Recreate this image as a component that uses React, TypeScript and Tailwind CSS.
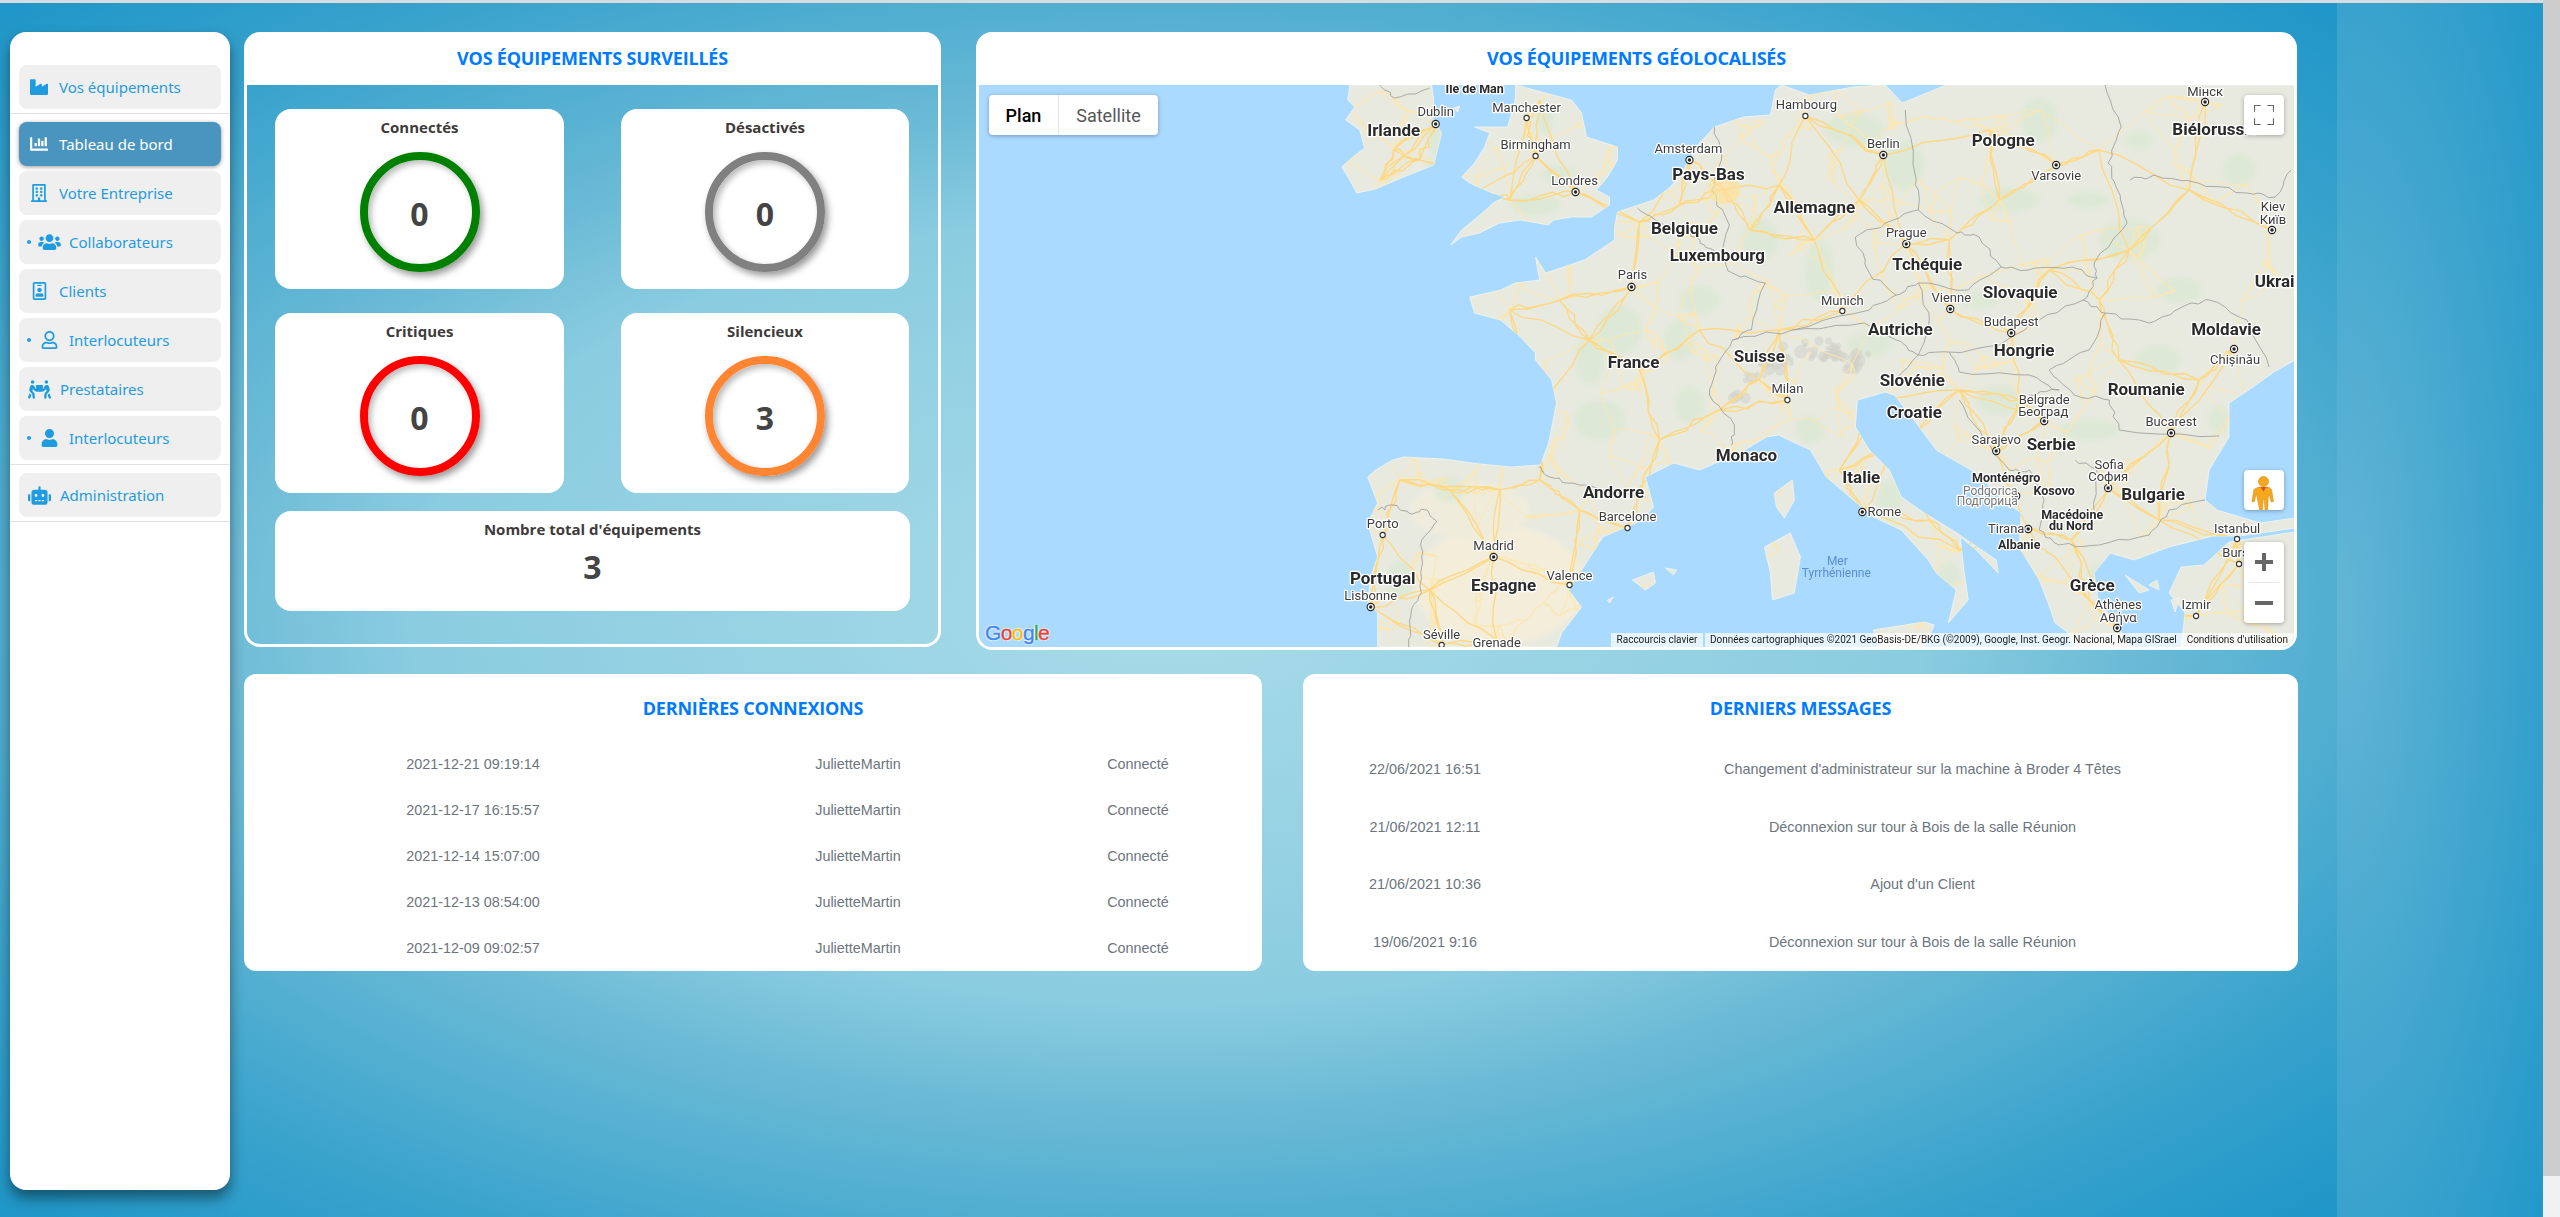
import React from "react";
import { FaIndustry, FaChartBar, FaRegBuilding, FaUsers, FaRegIdBadge, FaRegUser, FaUser, FaPeopleCarry, FaRobot } from "react-icons/fa";

type Item = { label: string; Icon: React.ComponentType<{ className?: string }>; dot?: boolean; active?: boolean; icon: string; gap: string };

const Nav = ({ it }: { it: Item }) => (
  <div className={`h-[44px] mx-[9px] rounded-lg flex items-center text-[15px] ${it.active ? "bg-[#4a95bf] text-white shadow-[0_1px_4px_rgba(0,0,0,0.4)]" : "bg-[#efefef] text-[#1f9ce0]"} ${it.dot ? "pl-[8px]" : "pl-[9px]"}`}>
    {it.dot && <span className="w-[4px] h-[4px] rounded-full bg-[#1f9ce0] shrink-0" />}
    <span className={`flex justify-center shrink-0 ${it.gap}`}>
      <it.Icon className={it.icon} />
    </span>
    <span className="mt-[1px]">{it.label}</span>
  </div>
);

const Divider = () => <div className="h-px bg-[#e2e0e6]" />;

const Title = ({ children }: { children: React.ReactNode }) => (
  <h2 className="text-[#007bff] text-[18px] font-bold tracking-[-0.2px] text-center">{children}</h2>
);

const Stat = ({ label, value, ring }: { label: string; value: string; ring: string }) => (
  <div className="h-[180px] bg-white rounded-2xl flex flex-col items-center pt-[8px]">
    <div className="text-[15px] leading-[20px] font-bold text-[#3e3a3a]">{label}</div>
    <div className={`mt-[15px] w-[120px] h-[120px] rounded-full border-[8px] flex items-center justify-center text-[32px] font-bold text-[#444] shadow-[3px_4px_7px_rgba(0,0,0,0.4),inset_3px_3px_6px_rgba(0,0,0,0.28)] ${ring}`}>
      <span className="mt-[4px]">{value}</span>
    </div>
  </div>
);

/* ---------- map ---------- */
const CONT = "1715,127 1744,117 1771,115 1776,90 1782,85 1810,95 1854,87 1886,85 1903,103 1947,85 2296,85 2296,360 2275,372 2254,387 2230,403 2230,437 2210,470 2206,500 2218,510 2261,523 2296,518 2296,528 2240,536 2214,536 2170,547 2135,560 2111,553 2095,573 2099,600 2119,627 2131,647 2076,647 2068,632 2056,623 2048,600 2040,580 2020,547 2022,513 2004,500 1977,473 1937,450 1917,423 1895,395 1886,392 1858,400 1856,427 1870,450 1890,470 1902,497 1925,513 1953,530 1997,560 1999,573 1977,550 1961,537 1965,573 1969,600 1949,623 1953,607 1957,590 1937,573 1929,560 1902,530 1874,517 1854,500 1827,477 1811,450 1779,435 1767,437 1740,453 1700,470 1674,463 1646,477 1654,507 1643,520 1603,537 1597,547 1569,590 1582,607 1562,633 1557,647 1378,647 1378,613 1368,603 1371,577 1378,557 1368,523 1378,503 1368,477 1376,470 1393,460 1404,457 1444,459 1480,464 1511,467 1541,465 1549,443 1557,403 1552,380 1536,360 1536,353 1521,337 1501,320 1475,313 1470,297 1501,290 1516,283 1540,280 1536,257 1546,273 1585,260 1615,240 1615,227 1618,212 1654,200 1671,187 1684,170 1700,143";
const LANDS = [
  CONT,
  "1350,85 1348,100 1355,107 1346,120 1360,130 1365,148 1353,157 1342,167 1350,180 1357,193 1376,189 1404,177 1434,165 1442,133 1433,118 1434,100 1432,85",
  "1516,85 1572,100 1582,113 1587,137 1618,147 1618,160 1608,177 1597,190 1610,197 1610,205 1592,217 1572,217 1554,220 1549,225 1521,220 1500,223 1480,233 1462,237 1451,245 1462,230 1478,217 1495,202 1506,197 1490,192 1470,183 1462,177 1475,163 1485,147 1490,133 1475,127 1508,127 1513,110 1516,97",
  "2296,532 2230,542 2205,565 2182,567 2170,593 2186,613 2182,647 2296,647",
  "1793,480 1795,500 1785,518 1777,507 1775,493",
  "1791,533 1801,557 1795,593 1773,600 1771,573 1765,547",
  "1874,630 1925,622 1935,625 1925,647 1880,647",
  "1633,580 1654,572 1656,583 1646,590",
  "1666,568 1677,570 1674,575",
  "1608,600 1614,597 1610,603",
  "2126,575 2150,590 2140,593",
  "2150,585 2158,580 2160,590",
  "2172,600 2180,598 2176,612",
  "1454,108 1460,106 1458,112",
];
const BORDERS = [
  "1539,467 1546,475 1567,483 1597,488 1646,497",
  "1378,510 1393,505 1409,513 1427,510 1437,522 1422,540 1422,567 1419,597 1411,617 1409,647",
  "1638,208 1660,222 1690,232 1705,245 1720,253 1733,273 1766,283 1752,330 1733,340 1716,367 1710,395 1735,425 1732,445",
  "1715,127 1722,160 1712,190 1730,225 1720,253",
  "1906,110 1917,180 1919,210 1886,223 1856,237 1870,273 1897,295 1919,283 1969,290 2002,267 1980,237 1958,233 1919,210",
  "2002,267 2029,270 2073,267 2098,278 2095,263 2128,223 2117,187 2109,163 2122,127 2106,85",
  "2131,180 2155,175 2199,183 2248,193 2276,197 2292,170",
  "2098,278 2084,300 2106,313 2150,323 2183,307 2210,300 2248,320 2270,367",
  "1733,340 1793,330 1865,323 1897,340 1919,355 1890,385",
  "1897,295 1870,310 1793,330",
  "1919,283 1930,320 1919,355",
  "2084,300 2040,320 2000,345 1950,352 1919,355",
  "1950,352 1960,372 2030,375 2060,390 2030,395",
  "2106,313 2090,350 2050,370 2075,395 2110,400 2120,430 2220,436",
  "1960,400 1985,440 2010,470 2030,470 2045,500 2040,530 2060,545 2100,545 2150,535 2170,510 2206,500",
  "2076,460 2098,470 2095,510",
  "1380,85 1395,98 1430,88",
];
const GREEN: [number, number, number, number][] = [[1440,135,12,22],[1560,175,18,9],[1535,205,25,10],[1445,165,18,8],[1545,120,8,14],[1855,130,30,16],[1905,165,20,24],[2010,200,30,12],[2040,120,18,22],[2140,140,14,9],[2240,170,16,16],[2180,290,22,12],[1620,330,22,24],[1680,340,15,20],[1600,420,25,20],[1590,360,14,25],[1690,405,14,18],[1700,300,20,14],[1760,240,18,22],[1820,270,14,30],[1870,345,22,12],[2000,400,24,14],[2090,430,30,10],[1980,300,20,8],[2130,240,30,20],[1450,490,16,12],[1400,580,14,18],[1810,430,14,14],[1890,500,12,20],[1950,575,10,12],[2100,575,12,10],[2090,200,20,8],[2160,360,22,14],[2220,420,10,14]];
const HUBS: [number, number][] = [[1436,124],[1394,150],[1380,180],[1420,160],[1527,118],[1536,156],[1576,192],[1510,200],[1540,100],[1480,190],[1690,160],[1725,190],[1680,205],[1640,222],[1806,116],[1884,155],[1780,185],[1815,240],[1750,230],[1632,287],[1560,300],[1590,340],[1510,310],[1540,400],[1640,370],[1700,330],[1660,440],[1720,410],[1760,380],[1788,400],[1843,311],[1780,330],[1907,244],[1860,200],[1951,309],[2012,333],[1950,240],[2000,200],[2057,165],[1990,130],[2100,150],[2206,102],[2273,230],[2190,190],[2130,250],[2100,300],[2050,270],[2235,349],[2172,433],[2200,380],[2120,360],[2045,421],[2109,488],[1997,451],[2020,400],[1960,390],[1863,512],[1905,440],[1930,520],[1960,550],[1880,400],[1840,470],[1383,535],[1371,607],[1400,480],[1450,490],[1494,557],[1500,490],[1570,585],[1628,528],[1580,510],[1540,480],[1442,645],[1497,640],[1430,590],[2029,529],[2072,540],[2118,628],[2238,539],[2197,616],[2240,564],[2160,520],[2090,600]];

let seed = 12345;
const rnd = () => { seed = (seed * 16807) % 2147483647; return seed / 2147483647; };

/* a road or border drawn as a wandering line between two points */
function wander(a: [number, number], b: [number, number], parts: number, amp: number) {
  let d = `M${a[0].toFixed(1)} ${a[1].toFixed(1)}`;
  for (let i = 1; i <= parts; i++) {
    const t = i / parts;
    const j = i === parts ? 0 : 1;
    const x = a[0] + (b[0] - a[0]) * t + j * (rnd() - 0.5) * amp;
    const y = a[1] + (b[1] - a[1]) * t + j * (rnd() - 0.5) * amp;
    d += `L${x.toFixed(1)} ${y.toFixed(1)}`;
  }
  return d;
}

function makeRoads() {
  const pts: [number, number][] = [...HUBS];
  for (let i = 0; i < 640; i++) {
    const x = 1345 + rnd() * 950, y = 85 + rnd() * 565;
    const west = x < 2040 ? 1 : 0.4;
    if (rnd() < west) pts.push([x, y]);
  }
  let main = "", minor = "";
  pts.forEach((p, i) => {
    const near = pts.map((q, j) => ({ q, j, d: (p[0] - q[0]) ** 2 + (p[1] - q[1]) ** 2 })).filter((n) => n.j !== i).sort((a, b) => a.d - b.d);
    if (i < HUBS.length) {
      HUBS.map((q, j) => ({ q, j, d: (p[0] - q[0]) ** 2 + (p[1] - q[1]) ** 2 }))
        .filter((n) => n.j !== i && n.d < 12100)
        .sort((a, b) => a.d - b.d)
        .slice(0, 3)
        .forEach((n) => { main += wander(p, n.q, 5, 7); });
    }
    near.slice(0, 3).forEach((n) => { minor += wander(p, n.q, 3, 5); });
  });
  return { main, minor };
}
const ROADS = makeRoads();

const BORDER_D = BORDERS.map((line) => {
  const pts = line.split(" ").map((s) => s.split(",").map(Number) as [number, number]);
  let d = "";
  for (let i = 0; i + 1 < pts.length; i++) {
    const seg = wander(pts[i], pts[i + 1], 5, 4);
    d += i === 0 ? seg : seg.replace(/^M[^L]*/, "");
  }
  return d;
});

const ALPS = Array.from({ length: 60 }, () => {
  const t = rnd();
  return { x: 1735 + t * 130 + (rnd() - 0.5) * 16, y: 400 - Math.sin(t * 2.4) * 50 + (rnd() - 0.5) * 22, r: 2 + rnd() * 5 };
});

type L = [string, number, number];
const COUNTRY: L[] = [["Irlande",1394,130],["Pays-Bas",1709,174],["Belgique",1685,228],["Luxembourg",1718,255],["France",1634,362],["Suisse",1760,356],["Pologne",2004,140],["Allemagne",1815,207],["Tchéquie",1928,264],["Slovaquie",2021,292],["Autriche",1901,329],["Moldavie",2227,329],["Hongrie",2025,350],["Andorre",1614,492],["Monaco",1747,455],["Portugal",1383,578],["Espagne",1504,585],["Slovénie",1913,380],["Croatie",1915,412],["Roumanie",2147,389],["Serbie",2052,444],["Bulgarie",2154,494],["Italie",1862,477],["Grèce",2093,585],["Biélorussie",2216,129],["Ukraine",2285,281]];
const SMALLC: L[] = [["Ile de Man",1475,89],["Monténégro",2007,478],["Kosovo",2055,490],["Albanie",2020,545],["Macédoine",2073,515],["du Nord",2072,526]];
const CITY: L[] = [["Dublin",1436,112],["Manchester",1527,108],["Birmingham",1536,145],["Amsterdam",1689,149],["Londres",1575,181],["Paris",1633,275],["Hambourg",1807,105],["Berlin",1884,144],["Varsovie",2057,176],["Мінск",2206,92],["Kiev",2274,207],["Київ",2274,220],["Prague",1907,233],["Vienne",1952,298],["Munich",1843,301],["Budapest",2012,322],["Chișinău",2236,360],["Barcelone",1628,517],["Porto",1383,524],["Madrid",1494,546],["Valence",1570,575],["Lisbonne",1371,596],["Séville",1442,635],["Grenade",1497,643],["Milan",1788,389],["Belgrade",2045,400],["Београд",2044,411],["Bucarest",2172,422],["Sarajevo",1997,440],["Sofia",2110,465],["София",2109,477],["Rome",1885,512],["Tirana",2007,529],["Istanbul",2238,529],["Bursa",2240,553],["Athènes",2119,605],["Αθήνα",2119,618],["Izmir",2197,605]];
const CAP: [number, number][] = [[1436,124],[1690,160],[1576,192],[1632,287],[1884,155],[2057,165],[2206,102],[2273,230],[1907,244],[1951,309],[2012,333],[2235,349],[1494,557],[1371,607],[2045,421],[2172,433],[1997,451],[2109,488],[1863,512],[2029,529],[2118,628],[2017,496]];
const TOWN: [number, number][] = [[1527,118],[1536,156],[1806,116],[1843,311],[1628,528],[1383,535],[1570,585],[1442,645],[1788,400],[2238,539],[2240,564],[2197,616]];

const Txt = ({ t, x, y, size, weight, fill }: { t: string; x: number; y: number; size: number; weight: number; fill: string }) => (
  <text x={x} y={y} textAnchor="middle" dominantBaseline="central" fontSize={size} fontWeight={weight} fill={fill} stroke="#fff" strokeWidth={2.6} strokeLinejoin="round" paintOrder="stroke" fontFamily="Roboto, sans-serif">{t}</text>
);

const MapArt = () => (
  <svg viewBox="979 85 1316 562" className="block w-full h-full" preserveAspectRatio="none">
    <defs>
      <clipPath id="land">{LANDS.map((p, i) => <polygon key={i} points={p} />)}</clipPath>
      <filter id="soft"><feGaussianBlur stdDeviation="2.5" /></filter>
    </defs>
    <rect x="979" y="85" width="1316" height="562" fill="#aadaff" />
    {LANDS.map((p, i) => <polygon key={i} points={p} fill="#e8eae0" stroke="#f4f6ee" strokeWidth="0.8" />)}
    <g clipPath="url(#land)">
      <g filter="url(#soft)">
        <ellipse cx="1500" cy="585" rx="85" ry="60" fill="#f3edd9" />
        <ellipse cx="1470" cy="510" rx="60" ry="28" fill="#efecdc" />
        {GREEN.map(([x, y, a, b], i) => <ellipse key={i} cx={x} cy={y} rx={a} ry={b} fill="#d6e8cf" opacity="0.6" />)}
      </g>
      {ALPS.map((a, i) => <circle key={i} cx={a.x} cy={a.y} r={a.r} fill="#cfd0c8" opacity="0.55" />)}
      <path d={ROADS.minor} fill="none" stroke="#fde7ad" strokeWidth="0.9" />
      <path d={ROADS.main} fill="none" stroke="#fdd885" strokeWidth="1.4" />
      {BORDER_D.map((d, i) => <path key={i} d={d} fill="none" stroke="#a3a39e" strokeWidth="0.9" />)}
      <ellipse cx="1725" cy="190" rx="16" ry="14" fill="#fde098" opacity="0.65" />
    </g>
    {TOWN.map(([x, y], i) => <circle key={i} cx={x} cy={y} r="2.6" fill="#fff" stroke="#333" strokeWidth="1.1" />)}
    {CAP.map(([x, y], i) => <g key={i}><circle cx={x} cy={y} r="3.6" fill="#fff" stroke="#222" strokeWidth="1.1" /><circle cx={x} cy={y} r="1.7" fill="#222" /></g>)}
    {CITY.map(([t, x, y]) => <Txt key={t} t={t} x={x} y={y} size={13} weight={400} fill="#3c3c3c" />)}
    {COUNTRY.map(([t, x, y]) => <Txt key={t} t={t} x={x} y={y} size={17} weight={700} fill="#2a2a2a" />)}
    {SMALLC.map(([t, x, y]) => <Txt key={t} t={t} x={x} y={y} size={12.5} weight={700} fill="#2a2a2a" />)}
    <Txt t="Podgorica" x={1991} y={491} size={12} weight={400} fill="#777" />
    <Txt t="Подгорица" x={1988} y={501} size={12} weight={400} fill="#777" />
    <text x={1838} y={561} textAnchor="middle" dominantBaseline="central" fontSize="12" fill="#5b8fd0" fontFamily="Roboto, sans-serif">Mer</text>
    <text x={1837} y={573} textAnchor="middle" dominantBaseline="central" fontSize="12" fill="#5b8fd0" fontFamily="Roboto, sans-serif">Tyrrhénienne</text>
  </svg>
);

const Pegman = () => (
  <svg viewBox="0 0 40 40" className="w-[40px] h-[40px]">
    <circle cx="19.5" cy="11.5" r="5" fill="#f5a81f" stroke="#d58b0c" strokeWidth="0.6" />
    <path d="M14.5 17h10l3 2.5 2 12-2.4.5-1.9-8-1 4-0.6 12.5h-2.5l-.9-11h-1l-.9 11h-2.5L13.2 28l-1-4-1.9 8-2.4-.5 2-12z" fill="#f5a81f" stroke="#d58b0c" strokeWidth="0.5" />
    <path d="M16.5 17h6l-3 4.5z" fill="#d9541e" />
  </svg>
);

const Google = () => (
  <div className="absolute left-[6px] bottom-[3px] font-['Liberation_Sans',sans-serif] text-[21px] leading-[22px] font-normal tracking-[-0.6px] [-webkit-text-stroke:0.4px_currentColor] [text-shadow:0_0_2px_#fff,0_0_2px_#fff,0_0_2px_#fff]">
    <span className="text-[#4285f4]">G</span><span className="text-[#ea4335]">o</span><span className="text-[#fbbc05]">o</span><span className="text-[#4285f4]">g</span><span className="text-[#34a853]">l</span><span className="text-[#ea4335]">e</span>
  </div>
);

const connexions = ["2021-12-21 09:19:14", "2021-12-17 16:15:57", "2021-12-14 15:07:00", "2021-12-13 08:54:00", "2021-12-09 09:02:57"];
const messages = [
  ["22/06/2021 16:51", "Changement d'administrateur sur la machine à Broder 4 Têtes"],
  ["21/06/2021 12:11", "Déconnexion sur tour à Bois de la salle Réunion"],
  ["21/06/2021 10:36", "Ajout d'un Client"],
  ["19/06/2021 9:16", "Déconnexion sur tour à Bois de la salle Réunion"],
];

const iconBase = "w-[18px] h-[18px]";
const items1: Item[] = [
  { label: "Votre Entreprise", Icon: FaRegBuilding, icon: "w-[16px] h-[18px]", gap: "w-[18px] ml-[2px] mr-[11px]" },
  { label: "Collaborateurs", Icon: FaUsers, dot: true, icon: "w-[23px] h-[18px]", gap: "w-[23px] ml-[7px] mr-[8px]" },
  { label: "Clients", Icon: FaRegIdBadge, icon: "w-[15px] h-[18px]", gap: "w-[18px] ml-[2px] mr-[11px]" },
  { label: "Interlocuteurs", Icon: FaRegUser, dot: true, icon: "w-[17px] h-[18px]", gap: "w-[23px] ml-[7px] mr-[8px]" },
  { label: "Prestataires", Icon: FaPeopleCarry, icon: "w-[23px] h-[19px]", gap: "w-[23px] mr-[9px]" },
  { label: "Interlocuteurs", Icon: FaUser, dot: true, icon: "w-[17px] h-[18px]", gap: "w-[23px] ml-[7px] mr-[8px]" },
];

export default function App() {
  return (
    <div className="w-[2560px] h-[1217px] overflow-hidden flex font-['Open_Sans',sans-serif] bg-white">
      <div className="w-[2543px] h-full flex flex-col">
        <div className="h-[3px] shrink-0 bg-[#d8dcde]" />
        <div className="flex-1 flex min-h-0">
          <div className="w-[2337px] flex pl-[10px] pt-[29px] bg-[radial-gradient(ellipse_at_center,#a8dbe8_0%,#8acce0_46%,#6cbbd6_58%,#37a2cc_83%,#1e96c8_100%)]">
            <aside className="w-[220px] h-[1158px] bg-white rounded-2xl shadow-[0_8px_14px_rgba(0,0,0,0.45)] pt-[33px] shrink-0 font-['Noto_Sans',sans-serif]">
              <Nav it={{ label: "Vos équipements", Icon: FaIndustry, icon: iconBase, gap: "w-[18px] ml-[2px] mr-[11px]" }} />
              <div className="mt-[4px] mb-[8px]"><Divider /></div>
              <Nav it={{ label: "Tableau de bord", Icon: FaChartBar, active: true, icon: iconBase, gap: "w-[18px] ml-[2px] mr-[11px]" }} />
              <div className="mt-[5px] flex flex-col gap-[5px]">
                {items1.map((it, i) => <Nav key={i} it={it} />)}
              </div>
              <div className="mt-[4px] mb-[8px]"><Divider /></div>
              <Nav it={{ label: "Administration", Icon: FaRobot, icon: "w-[23px] h-[19px]", gap: "w-[23px] mr-[9px]" }} />
              <div className="mt-[4px]"><Divider /></div>
            </aside>

            <main className="ml-[14px] w-[2054px] flex flex-col">
              <div className="flex h-[618px]">
                <section className="w-[697px] h-[615px] flex flex-col">
                  <div className="h-[53px] bg-white rounded-t-2xl flex items-center justify-center shrink-0"><Title>VOS ÉQUIPEMENTS SURVEILLÉS</Title></div>
                  <div className="flex-1 border-x-[3px] border-b-[3px] border-white rounded-b-2xl px-[28px] pt-[24px]">
                    <div className="grid grid-cols-[289px_288px] gap-x-[57px] gap-y-[24px]">
                      <Stat label="Connectés" value="0" ring="border-[#008000]" />
                      <Stat label="Désactivés" value="0" ring="border-[#808080]" />
                      <Stat label="Critiques" value="0" ring="border-[#ff0000]" />
                      <Stat label="Silencieux" value="3" ring="border-[#ff8533]" />
                    </div>
                    <div className="mt-[18px] h-[100px] bg-white rounded-2xl flex flex-col items-center pt-[8px]">
                      <div className="text-[15px] leading-[20px] font-bold text-[#3e3a3a]">Nombre total d'équipements</div>
                      <div className="mt-[6px] text-[32px] leading-[44px] font-bold text-[#444]">3</div>
                    </div>
                  </div>
                </section>

                <section className="ml-[35px] w-[1321px] h-[618px] flex flex-col">
                  <div className="h-[53px] bg-white rounded-t-2xl flex items-center justify-center shrink-0"><Title>VOS ÉQUIPEMENTS GÉOLOCALISÉS</Title></div>
                  <div className="flex-1 border-x-[3px] border-b-[3px] border-white rounded-b-2xl overflow-hidden relative">
                    <MapArt />
                    <div className="absolute left-[10px] top-[10px] h-[40px] w-[169px] bg-white rounded-sm shadow-[0_1px_4px_rgba(0,0,0,0.3)] flex items-center font-['Roboto',sans-serif] text-[18px]">
                      <div className="w-[70px] h-full flex items-center justify-center font-medium text-black border-r border-[#e6e6e6]">Plan</div>
                      <div className="flex-1 h-full flex items-center justify-center text-[#565656]">Satellite</div>
                    </div>
                    <div className="absolute left-[1265px] top-[10px] w-[40px] h-[40px] bg-white rounded-sm shadow-[0_1px_4px_rgba(0,0,0,0.3)] flex items-center justify-center">
                      <svg viewBox="0 0 18 18" className="w-[20px] h-[20px]" fill="none" stroke="#666" strokeWidth="2">
                        <path d="M0 6V0h6M12 0h6v6M18 12v6h-6M6 18H0v-6" />
                      </svg>
                    </div>
                    <div className="absolute left-[1265px] top-[385px] w-[40px] h-[40px] bg-white rounded-sm shadow-[0_1px_4px_rgba(0,0,0,0.3)]"><Pegman /></div>
                    <div className="absolute left-[1265px] top-[457px] w-[40px] h-[81px] bg-white rounded-sm shadow-[0_1px_4px_rgba(0,0,0,0.3)] flex flex-col items-center">
                      <div className="h-[40px] flex items-center justify-center">
                        <svg viewBox="0 0 18 18" className="w-[18px] h-[18px]"><path d="M0 7h7V0h4v7h7v4h-7v7H7v-7H0z" fill="#666" /></svg>
                      </div>
                      <div className="w-[30px] h-px bg-[#e6e6e6]" />
                      <div className="h-[40px] flex items-center justify-center">
                        <svg viewBox="0 0 18 18" className="w-[18px] h-[18px]"><path d="M0 7h18v4H0z" fill="#666" /></svg>
                      </div>
                    </div>
                    <Google />
                    <div className="absolute right-0 bottom-0 h-[14px] flex items-center gap-[2px] font-['Roboto',sans-serif] text-[10px] text-[#222] leading-[14px]">
                      <span className="bg-white/70 w-[92px] text-center">Raccourcis clavier</span>
                      <span className="bg-white/70 pl-[5px] pr-[6px] flex gap-[6px] w-[589px] justify-between"><span>Données cartographiques ©2021 GeoBasis-DE/BKG (©2009), Google, Inst. Geogr. Nacional, Mapa GISrael</span><span>Conditions d'utilisation</span></span>
                    </div>
                  </div>
                </section>
              </div>

              <div className="mt-[24px] flex font-['Liberation_Sans',sans-serif] text-[14.4px] text-[#6c757d]">
                <section className="w-[1018px] h-[297px] bg-white rounded-xl overflow-hidden">
                  <div className="h-[68px] flex items-center justify-center font-['Open_Sans',sans-serif]"><Title>DERNIÈRES CONNEXIONS</Title></div>
                  <div className="mt-[13px] flex flex-col gap-[28px]">
                    {connexions.map((d) => (
                      <div key={d} className="grid grid-cols-[458px_312px_248px] text-center leading-[18px]">
                        <span>{d}</span><span>JulietteMartin</span><span>Connecté</span>
                      </div>
                    ))}
                  </div>
                </section>
                <section className="ml-[41px] w-[995px] h-[297px] bg-white rounded-xl overflow-hidden">
                  <div className="h-[68px] flex items-center justify-center font-['Open_Sans',sans-serif]"><Title>DERNIERS MESSAGES</Title></div>
                  <div className="mt-[18px] flex flex-col gap-[39.5px]">
                    {messages.map(([d, m]) => (
                      <div key={d} className="grid grid-cols-[244px_751px] text-center leading-[18px]">
                        <span>{d}</span><span>{m}</span>
                      </div>
                    ))}
                  </div>
                </section>
              </div>
            </main>
          </div>
          <div className="w-[206px] bg-[radial-gradient(ellipse_291px_1000px_at_0%_50%,#64b6d5_0%,#1e96c8_100%)]" />
        </div>
      </div>
      <div className="w-[17px] h-full bg-[#f1f1f1] flex flex-col">
        <div className="h-[1176px] bg-[#cdcdcd]" />
      </div>
    </div>
  );
}
